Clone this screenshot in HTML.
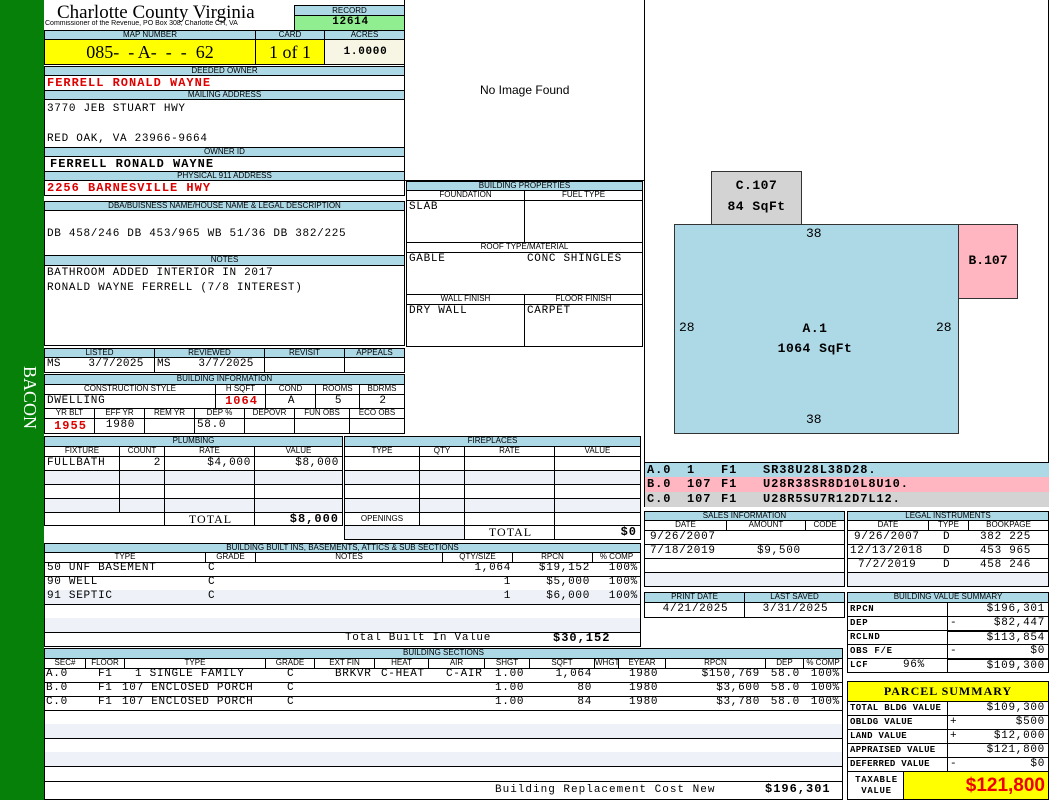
<!DOCTYPE html>
<html><head><meta charset="utf-8"><style>
*{margin:0;padding:0}
body{width:1050px;height:800px;position:relative;background:#fff;overflow:hidden;font-family:"Liberation Sans",sans-serif}
.a{position:absolute;box-sizing:border-box;overflow:hidden;white-space:nowrap}
.h{background:#add8e6;border:1px solid #000;font-size:8px;text-align:center;line-height:8px;color:#000}
.s{background:#fff;border:1px solid #000;font-size:8px;text-align:center;line-height:8px}
.c{border:1px solid #000;font-family:"Liberation Mono",monospace;font-size:11px;line-height:13px;padding-left:2px;letter-spacing:0.7px}
.alt{background:#eef2f8}
.r{text-align:right;padding-right:3px}
.ctr{text-align:center}
.red{color:#d00;font-weight:bold}
.b{font-weight:bold}
.bm{font-family:"Liberation Mono",monospace;font-weight:bold;font-size:12px;letter-spacing:1px}
.lg{position:absolute;top:0}
</style></head><body>
<div class="a" style="left:0;top:0;width:44px;height:800px;background:#07800a"></div>
<div class="a" style="left:4px;top:352px;width:36px;height:92px;color:#fff;font:18px 'Liberation Serif',serif;writing-mode:vertical-rl;text-align:center">BACON</div>

<div class="a" style="left:57px;top:2px;font:19px 'Liberation Serif',serif">Charlotte County Virginia</div>
<div class="a" style="left:45px;top:20px;font-size:7px">Commissioner of the Revenue, PO Box 308, Charlotte CH, VA</div>
<div class="a h" style="left:294px;top:5px;width:111px;height:11px;line-height:9px">RECORD</div>
<div class="a c b ctr" style="left:294px;top:15px;width:111px;height:16px;background:#90ee90">12614</div>

<div class="a h" style="left:44px;top:30px;width:212px;height:10px">MAP NUMBER</div>
<div class="a h" style="left:255px;top:30px;width:70px;height:10px">CARD</div>
<div class="a h" style="left:324px;top:30px;width:81px;height:10px">ACRES</div>
<div class="a" style="left:44px;top:39px;width:212px;height:26px;background:#ffff00;border:1px solid #000;font:18px 'Liberation Serif',serif;line-height:24px;text-align:center">085- &nbsp;- A- &nbsp;- &nbsp;- &nbsp;62</div>
<div class="a" style="left:255px;top:39px;width:70px;height:26px;background:#ffff00;border:1px solid #000;font:18px 'Liberation Serif',serif;line-height:24px;text-align:center">1 of 1</div>
<div class="a c b ctr" style="left:324px;top:39px;width:81px;height:26px;background:#f7f6e4;line-height:24px">1.0000</div>

<div class="a h" style="left:44px;top:66px;width:361px;height:10px">DEEDED OWNER</div>
<div class="a c red bm" style="left:44px;top:75px;width:361px;height:16px;line-height:15px">FERRELL RONALD WAYNE</div>
<div class="a h" style="left:44px;top:90px;width:361px;height:10px">MAILING ADDRESS</div>
<div class="a c" style="left:44px;top:99px;width:361px;height:49px;line-height:15px;padding-top:2px">3770 JEB STUART HWY<br><br>RED OAK, VA 23966-9664</div>
<div class="a h" style="left:44px;top:147px;width:361px;height:10px">OWNER ID</div>
<div class="a c bm" style="left:44px;top:156px;width:361px;height:16px;padding-left:5px;line-height:15px">FERRELL RONALD WAYNE</div>
<div class="a h" style="left:44px;top:171px;width:361px;height:10px">PHYSICAL 911 ADDRESS</div>
<div class="a c red bm" style="left:44px;top:180px;width:361px;height:16px;line-height:15px">2256 BARNESVILLE HWY</div>

<div class="a h" style="left:44px;top:201px;width:361px;height:10px">DBA/BUISNESS NAME/HOUSE NAME &amp; LEGAL DESCRIPTION</div>
<div class="a c" style="left:44px;top:210px;width:361px;height:46px;padding-top:17px">DB 458/246 DB 453/965  WB 51/36 DB 382/225</div>
<div class="a h" style="left:44px;top:255px;width:361px;height:11px">NOTES</div>
<div class="a c" style="left:44px;top:265px;width:361px;height:81px;line-height:15px">BATHROOM ADDED INTERIOR IN 2017<br>RONALD WAYNE FERRELL (7/8 INTEREST)</div>

<div class="a h" style="left:44px;top:348px;width:111px;height:10px">LISTED</div>
<div class="a h" style="left:154px;top:348px;width:111px;height:10px">REVIEWED</div>
<div class="a h" style="left:264px;top:348px;width:81px;height:10px">REVISIT</div>
<div class="a h" style="left:344px;top:348px;width:61px;height:10px">APPEALS</div>
<div class="a c" style="left:44px;top:357px;width:111px;height:16px;letter-spacing:0.3px">MS &nbsp;&nbsp;&nbsp;3/7/2025</div>
<div class="a c" style="left:154px;top:357px;width:111px;height:16px;letter-spacing:0.3px">MS &nbsp;&nbsp;&nbsp;3/7/2025</div>
<div class="a c" style="left:264px;top:357px;width:81px;height:16px"></div>
<div class="a c" style="left:344px;top:357px;width:61px;height:16px"></div>

<div class="a h" style="left:44px;top:374px;width:361px;height:11px">BUILDING INFORMATION</div>
<div class="a s" style="left:44px;top:384px;width:172px;height:11px">CONSTRUCTION STYLE</div>
<div class="a s" style="left:215px;top:384px;width:51px;height:11px">H SQFT</div>
<div class="a s" style="left:265px;top:384px;width:51px;height:11px">COND</div>
<div class="a s" style="left:315px;top:384px;width:45px;height:11px">ROOMS</div>
<div class="a s" style="left:359px;top:384px;width:46px;height:11px">BDRMS</div>
<div class="a c" style="left:44px;top:394px;width:172px;height:15px">DWELLING</div>
<div class="a c red ctr bm" style="left:215px;top:394px;width:51px;height:15px">1064</div>
<div class="a c ctr" style="left:265px;top:394px;width:51px;height:15px">A</div>
<div class="a c ctr" style="left:315px;top:394px;width:45px;height:15px">5</div>
<div class="a c ctr" style="left:359px;top:394px;width:46px;height:15px">2</div>
<div class="a s" style="left:44px;top:408px;width:51px;height:11px">YR BLT</div>
<div class="a s" style="left:94px;top:408px;width:51px;height:11px">EFF YR</div>
<div class="a s" style="left:144px;top:408px;width:51px;height:11px">REM YR</div>
<div class="a s" style="left:194px;top:408px;width:51px;height:11px">DEP %</div>
<div class="a s" style="left:244px;top:408px;width:51px;height:11px">DEPOVR</div>
<div class="a s" style="left:294px;top:408px;width:56px;height:11px">FUN OBS</div>
<div class="a s" style="left:349px;top:408px;width:56px;height:11px">ECO OBS</div>
<div class="a c red ctr bm" style="left:44px;top:418px;width:51px;height:16px;line-height:14px">1955</div>
<div class="a c ctr" style="left:94px;top:418px;width:51px;height:16px">1980</div>
<div class="a c" style="left:144px;top:418px;width:51px;height:16px"></div>
<div class="a c" style="left:194px;top:418px;width:51px;height:16px">58.0</div>
<div class="a c" style="left:244px;top:418px;width:51px;height:16px"></div>
<div class="a c" style="left:294px;top:418px;width:56px;height:16px"></div>
<div class="a c" style="left:349px;top:418px;width:56px;height:16px"></div>

<!-- plumbing -->
<div class="a h" style="left:44px;top:436px;width:299px;height:11px">PLUMBING</div>
<div class="a s" style="left:44px;top:446px;width:76px;height:11px">FIXTURE</div>
<div class="a s" style="left:119px;top:446px;width:46px;height:11px">COUNT</div>
<div class="a s" style="left:164px;top:446px;width:91px;height:11px">RATE</div>
<div class="a s" style="left:254px;top:446px;width:89px;height:11px">VALUE</div>
<div class="a c" style="left:44px;top:456px;width:76px;height:15px">FULLBATH</div>
<div class="a c r" style="left:119px;top:456px;width:46px;height:15px">2</div>
<div class="a c r" style="left:164px;top:456px;width:91px;height:15px">$4,000</div>
<div class="a c r" style="left:254px;top:456px;width:89px;height:15px">$8,000</div>
<div class="a c alt" style="left:44px;top:470px;width:76px;height:15px"></div><div class="a c alt" style="left:119px;top:470px;width:46px;height:15px"></div><div class="a c alt" style="left:164px;top:470px;width:91px;height:15px"></div><div class="a c alt" style="left:254px;top:470px;width:89px;height:15px"></div>
<div class="a c" style="left:44px;top:484px;width:76px;height:15px"></div><div class="a c" style="left:119px;top:484px;width:46px;height:15px"></div><div class="a c" style="left:164px;top:484px;width:91px;height:15px"></div><div class="a c" style="left:254px;top:484px;width:89px;height:15px"></div>
<div class="a c alt" style="left:44px;top:498px;width:76px;height:15px"></div><div class="a c alt" style="left:119px;top:498px;width:46px;height:15px"></div><div class="a c alt" style="left:164px;top:498px;width:91px;height:15px"></div><div class="a c alt" style="left:254px;top:498px;width:89px;height:15px"></div>
<div class="a c" style="left:44px;top:512px;width:121px;height:14px"></div>
<div class="a c ctr" style="left:164px;top:512px;width:91px;height:14px;font-family:'Liberation Serif',serif;font-size:12px;letter-spacing:1px">TOTAL</div>
<div class="a c r bm" style="left:254px;top:512px;width:89px;height:14px">$8,000</div>

<!-- fireplaces -->
<div class="a h" style="left:344px;top:436px;width:297px;height:11px">FIREPLACES</div>
<div class="a s" style="left:344px;top:446px;width:76px;height:11px">TYPE</div>
<div class="a s" style="left:419px;top:446px;width:46px;height:11px">QTY</div>
<div class="a s" style="left:464px;top:446px;width:91px;height:11px">RATE</div>
<div class="a s" style="left:554px;top:446px;width:87px;height:11px">VALUE</div>
<div class="a c" style="left:344px;top:456px;width:76px;height:15px"></div><div class="a c" style="left:419px;top:456px;width:46px;height:15px"></div><div class="a c" style="left:464px;top:456px;width:91px;height:15px"></div><div class="a c" style="left:554px;top:456px;width:87px;height:15px"></div>
<div class="a c alt" style="left:344px;top:470px;width:76px;height:15px"></div><div class="a c alt" style="left:419px;top:470px;width:46px;height:15px"></div><div class="a c alt" style="left:464px;top:470px;width:91px;height:15px"></div><div class="a c alt" style="left:554px;top:470px;width:87px;height:15px"></div>
<div class="a c" style="left:344px;top:484px;width:76px;height:15px"></div><div class="a c" style="left:419px;top:484px;width:46px;height:15px"></div><div class="a c" style="left:464px;top:484px;width:91px;height:15px"></div><div class="a c" style="left:554px;top:484px;width:87px;height:15px"></div>
<div class="a c alt" style="left:344px;top:498px;width:76px;height:15px"></div><div class="a c alt" style="left:419px;top:498px;width:46px;height:15px"></div><div class="a c alt" style="left:464px;top:498px;width:91px;height:15px"></div><div class="a c alt" style="left:554px;top:498px;width:87px;height:15px"></div>
<div class="a s" style="left:344px;top:512px;width:76px;height:14px;line-height:12px">OPENINGS</div><div class="a c" style="left:419px;top:512px;width:46px;height:14px"></div><div class="a c" style="left:464px;top:512px;width:91px;height:14px"></div><div class="a c" style="left:554px;top:512px;width:87px;height:14px"></div>
<div class="a c alt" style="left:344px;top:525px;width:121px;height:15px"></div>
<div class="a c ctr" style="left:464px;top:525px;width:91px;height:15px;font-family:'Liberation Serif',serif;font-size:12px;letter-spacing:1px">TOTAL</div>
<div class="a c r bm" style="left:554px;top:525px;width:87px;height:15px">$0</div>

<!-- built ins -->
<div class="a h" style="left:44px;top:543px;width:597px;height:10px">BUILDING BUILT INS, BASEMENTS, ATTICS &amp; SUB SECTIONS</div>
<div class="a s" style="left:44px;top:552px;width:162px;height:11px">TYPE</div>
<div class="a s" style="left:205px;top:552px;width:51px;height:11px">GRADE</div>
<div class="a s" style="left:255px;top:552px;width:188px;height:11px">NOTES</div>
<div class="a s" style="left:442px;top:552px;width:71px;height:11px">QTY/SIZE</div>
<div class="a s" style="left:512px;top:552px;width:81px;height:11px">RPCN</div>
<div class="a s" style="left:592px;top:552px;width:49px;height:11px">% COMP</div>
<div class="a c" style="left:44px;top:562px;width:597px;height:15px;border-width:0 1px 1px 1px"><span class="lg" style="left:2px">50 UNF BASEMENT</span><span class="lg" style="left:163px">C</span><span class="lg" style="right:129px">1,064</span><span class="lg" style="right:50px">$19,152</span><span class="lg" style="right:2px">100%</span></div>
<div class="a c" style="left:44px;top:576px;width:597px;height:15px;border-width:0 1px 1px 1px"><span class="lg" style="left:2px">90 WELL</span><span class="lg" style="left:163px">C</span><span class="lg" style="right:129px">1</span><span class="lg" style="right:50px">$5,000</span><span class="lg" style="right:2px">100%</span></div>
<div class="a c alt" style="left:44px;top:590px;width:597px;height:15px;border-width:0 1px 1px 1px"><span class="lg" style="left:2px">91 SEPTIC</span><span class="lg" style="left:163px">C</span><span class="lg" style="right:129px">1</span><span class="lg" style="right:50px">$6,000</span><span class="lg" style="right:2px">100%</span></div>
<div class="a c" style="left:44px;top:604px;width:597px;height:15px;border-width:0 1px 1px 1px"></div>
<div class="a c alt" style="left:44px;top:618px;width:597px;height:15px;border-width:0 1px 1px 1px"></div>
<div class="a c" style="left:44px;top:632px;width:597px;height:15px;border-width:0 1px 1px 1px"><span class="lg" style="left:300px">Total Built In Value</span><span class="lg bm" style="left:508px">$30,152</span></div>

<!-- building sections -->
<div class="a h" style="left:44px;top:648px;width:799px;height:11px">BUILDING SECTIONS</div>
<div class="a s" style="left:44px;top:658px;width:42px;height:11px">SEC#</div>
<div class="a s" style="left:85px;top:658px;width:40px;height:11px">FLOOR</div>
<div class="a s" style="left:124px;top:658px;width:142px;height:11px">TYPE</div>
<div class="a s" style="left:265px;top:658px;width:50px;height:11px">GRADE</div>
<div class="a s" style="left:314px;top:658px;width:61px;height:11px">EXT FIN</div>
<div class="a s" style="left:374px;top:658px;width:55px;height:11px">HEAT</div>
<div class="a s" style="left:428px;top:658px;width:57px;height:11px">AIR</div>
<div class="a s" style="left:484px;top:658px;width:46px;height:11px">SHGT</div>
<div class="a s" style="left:529px;top:658px;width:66px;height:11px">SQFT</div>
<div class="a s" style="left:594px;top:658px;width:25px;height:11px">WHGT</div>
<div class="a s" style="left:618px;top:658px;width:48px;height:11px">EYEAR</div>
<div class="a s" style="left:665px;top:658px;width:101px;height:11px">RPCN</div>
<div class="a s" style="left:765px;top:658px;width:39px;height:11px">DEP</div>
<div class="a s" style="left:803px;top:658px;width:40px;height:11px">% COMP</div>
<div class="a c" style="left:44px;top:668px;width:799px;height:15px;border-width:0 1px 1px 1px"><span class="lg" style="left:1px">A.0</span><span class="lg" style="left:53px">F1</span><span class="lg" style="left:90px">1 SINGLE FAMILY</span><span class="lg" style="left:242px">C</span><span class="lg" style="left:290px">BRKVR</span><span class="lg" style="left:336px">C-HEAT</span><span class="lg" style="left:401px">C-AIR</span><span class="lg" style="left:450px">1.00</span><span class="lg" style="right:250px">1,064</span><span class="lg" style="left:584px">1980</span><span class="lg" style="right:82px">$150,769</span><span class="lg" style="right:42px">58.0</span><span class="lg" style="right:2px">100%</span></div>
<div class="a c" style="left:44px;top:682px;width:799px;height:15px;border-width:0 1px 1px 1px"><span class="lg" style="left:1px">B.0</span><span class="lg" style="left:53px">F1</span><span class="lg" style="left:77px">107 ENCLOSED PORCH</span><span class="lg" style="left:242px">C</span><span class="lg" style="left:450px">1.00</span><span class="lg" style="right:250px">80</span><span class="lg" style="left:584px">1980</span><span class="lg" style="right:82px">$3,600</span><span class="lg" style="right:42px">58.0</span><span class="lg" style="right:2px">100%</span></div>
<div class="a c" style="left:44px;top:696px;width:799px;height:15px;border-width:0 1px 1px 1px"><span class="lg" style="left:1px">C.0</span><span class="lg" style="left:53px">F1</span><span class="lg" style="left:77px">107 ENCLOSED PORCH</span><span class="lg" style="left:242px">C</span><span class="lg" style="left:450px">1.00</span><span class="lg" style="right:250px">84</span><span class="lg" style="left:584px">1980</span><span class="lg" style="right:82px">$3,780</span><span class="lg" style="right:42px">58.0</span><span class="lg" style="right:2px">100%</span></div>
<div class="a c" style="left:44px;top:710px;width:799px;height:15px;border-width:0 1px 1px 1px"></div>
<div class="a c alt" style="left:44px;top:724px;width:799px;height:15px;border-width:0 1px 1px 1px"></div>
<div class="a c" style="left:44px;top:738px;width:799px;height:15px;border-width:0 1px 1px 1px"></div>
<div class="a c alt" style="left:44px;top:752px;width:799px;height:15px;border-width:0 1px 1px 1px"></div>
<div class="a c" style="left:44px;top:766px;width:799px;height:16px;border-width:0 1px 1px 1px"></div>
<div class="a c" style="left:44px;top:781px;width:799px;height:19px;border-width:0 1px 1px 1px"><span class="lg" style="left:450px;top:3px;letter-spacing:1px">Building Replacement Cost New</span><span class="lg bm" style="left:720px;top:2px">$196,301</span></div>

<!-- image area -->
<div class="a" style="left:404px;top:0;width:241px;height:181px;border:1px solid #000;border-top:0"></div>
<div class="a" style="left:480px;top:83px;font-size:12px">No Image Found</div>

<!-- building properties -->
<div class="a h" style="left:406px;top:181px;width:237px;height:10px">BUILDING PROPERTIES</div>
<div class="a s" style="left:406px;top:190px;width:119px;height:11px">FOUNDATION</div>
<div class="a s" style="left:524px;top:190px;width:119px;height:11px">FUEL TYPE</div>
<div class="a c" style="left:406px;top:200px;width:119px;height:43px">SLAB</div>
<div class="a c" style="left:524px;top:200px;width:119px;height:43px"></div>
<div class="a s" style="left:406px;top:242px;width:237px;height:11px">ROOF TYPE/MATERIAL</div>
<div class="a c" style="left:406px;top:252px;width:237px;height:43px">GABLE<span class="lg" style="left:120px">CONC SHINGLES</span></div>
<div class="a s" style="left:406px;top:294px;width:119px;height:11px">WALL FINISH</div>
<div class="a s" style="left:524px;top:294px;width:119px;height:11px">FLOOR FINISH</div>
<div class="a c" style="left:406px;top:304px;width:119px;height:43px">DRY WALL</div>
<div class="a c" style="left:524px;top:304px;width:119px;height:43px">CARPET</div>

<!-- sketch -->
<div class="a" style="left:644px;top:0;width:405px;height:463px;border:1px solid #000;border-top:0"></div>
<div class="a" style="left:711px;top:171px;width:91px;height:54px;background:#d3d3d3;border:1px solid #333;font:bold 13px 'Liberation Mono',monospace;text-align:center;line-height:21px;padding-top:3px;letter-spacing:0.5px">C.107<br>84 SqFt</div>
<div class="a" style="left:674px;top:224px;width:285px;height:210px;background:#add8e6;border:1px solid #333"></div>
<div class="a" style="left:958px;top:224px;width:60px;height:75px;background:#ffb6c1;border:1px solid #333;font:bold 13px 'Liberation Mono',monospace;text-align:center;line-height:72px">B.107</div>
<div class="a" style="left:806px;top:226px;font:13px 'Liberation Mono',monospace">38</div>
<div class="a" style="left:806px;top:412px;font:13px 'Liberation Mono',monospace">38</div>
<div class="a" style="left:679px;top:320px;font:13px 'Liberation Mono',monospace">28</div>
<div class="a" style="left:936px;top:320px;font:13px 'Liberation Mono',monospace">28</div>
<div class="a" style="left:760px;top:319px;width:110px;text-align:center;font:bold 13px 'Liberation Mono',monospace;line-height:20px;letter-spacing:0.5px">A.1<br>1064 SqFt</div>

<div class="a" style="left:644px;top:463px;width:405px;height:15px;background:#add8e6;font:bold 12px 'Liberation Mono',monospace;line-height:15px;border-left:1px solid #000;letter-spacing:0.9px"><span class="lg" style="left:2px">A.0</span><span class="lg" style="left:42px">1</span><span class="lg" style="left:76px">F1</span><span class="lg" style="left:118px">SR38U28L38D28.</span></div>
<div class="a" style="left:644px;top:477px;width:405px;height:15px;background:#ffb6c1;font:bold 12px 'Liberation Mono',monospace;line-height:15px;border-left:1px solid #000;letter-spacing:0.9px"><span class="lg" style="left:2px">B.0</span><span class="lg" style="left:42px">107</span><span class="lg" style="left:76px">F1</span><span class="lg" style="left:118px">U28R38SR8D10L8U10.</span></div>
<div class="a" style="left:644px;top:492px;width:405px;height:15px;background:#d3d3d3;font:bold 12px 'Liberation Mono',monospace;line-height:15px;border-left:1px solid #000;letter-spacing:0.9px"><span class="lg" style="left:2px">C.0</span><span class="lg" style="left:42px">107</span><span class="lg" style="left:76px">F1</span><span class="lg" style="left:118px">U28R5SU7R12D7L12.</span></div>

<!-- sales -->
<div class="a h" style="left:644px;top:511px;width:201px;height:10px">SALES INFORMATION</div>
<div class="a s" style="left:644px;top:520px;width:83px;height:11px">DATE</div>
<div class="a s" style="left:726px;top:520px;width:80px;height:11px">AMOUNT</div>
<div class="a s" style="left:805px;top:520px;width:40px;height:11px">CODE</div>
<div class="a c" style="left:644px;top:530px;width:201px;height:15px;padding-left:5px">9/26/2007</div>
<div class="a c" style="left:644px;top:544px;width:201px;height:15px;padding-left:5px">7/18/2019<span class="lg" style="left:112px">$9,500</span></div>
<div class="a c" style="left:644px;top:558px;width:201px;height:15px"></div>
<div class="a c alt" style="left:644px;top:572px;width:201px;height:15px"></div>

<div class="a h" style="left:847px;top:511px;width:202px;height:10px">LEGAL INSTRUMENTS</div>
<div class="a s" style="left:847px;top:520px;width:82px;height:11px">DATE</div>
<div class="a s" style="left:928px;top:520px;width:41px;height:11px">TYPE</div>
<div class="a s" style="left:968px;top:520px;width:81px;height:11px">BOOKPAGE</div>
<div class="a c" style="left:847px;top:530px;width:202px;height:15px"><span class="lg" style="left:6px">9/26/2007</span><span class="lg" style="left:95px">D</span><span class="lg" style="left:132px">382 225</span></div>
<div class="a c" style="left:847px;top:544px;width:202px;height:15px"><span class="lg" style="left:2px">12/13/2018</span><span class="lg" style="left:95px">D</span><span class="lg" style="left:132px">453 965</span></div>
<div class="a c" style="left:847px;top:558px;width:202px;height:15px"><span class="lg" style="left:10px">7/2/2019</span><span class="lg" style="left:95px">D</span><span class="lg" style="left:132px">458 246</span></div>
<div class="a c alt" style="left:847px;top:572px;width:202px;height:15px"></div>

<div class="a h" style="left:644px;top:592px;width:101px;height:11px">PRINT DATE</div>
<div class="a h" style="left:744px;top:592px;width:101px;height:11px">LAST SAVED</div>
<div class="a c ctr" style="left:644px;top:602px;width:101px;height:16px">4/21/2025</div>
<div class="a c ctr" style="left:744px;top:602px;width:101px;height:16px">3/31/2025</div>

<!-- value summary -->
<div class="a h" style="left:847px;top:592px;width:202px;height:11px">BUILDING VALUE SUMMARY</div>
<div class="a c b" style="left:847px;top:602px;width:101px;height:15px;font-size:9px">RPCN</div><div class="a c r" style="left:947px;top:602px;width:102px;height:15px">$196,301</div>
<div class="a c b" style="left:847px;top:616px;width:101px;height:15px;font-size:9px">DEP</div><div class="a c r" style="left:947px;top:616px;width:102px;height:15px"><span class="lg" style="left:2px">-</span>$82,447</div>
<div class="a c b" style="left:847px;top:630px;width:101px;height:15px;font-size:9px">RCLND</div><div class="a c r" style="left:947px;top:630px;width:102px;height:15px;border-top-width:2px;line-height:12px">$113,854</div>
<div class="a c b" style="left:847px;top:644px;width:101px;height:15px;font-size:9px">OBS F/E</div><div class="a c r" style="left:947px;top:644px;width:102px;height:15px"><span class="lg" style="left:2px">-</span>$0</div>
<div class="a c b" style="left:847px;top:658px;width:101px;height:15px;font-size:9px">LCF<span class="lg" style="left:55px;font-size:11px;font-weight:normal">96%</span></div><div class="a c r" style="left:947px;top:658px;width:102px;height:15px;border-top-width:2px;line-height:12px">$109,300</div>

<!-- parcel summary -->
<div class="a" style="left:847px;top:681px;width:202px;height:21px;background:#ffff00;border:1px solid #000;text-align:center;font:bold 12px 'Liberation Serif',serif;line-height:19px;letter-spacing:1px">PARCEL SUMMARY</div>
<div class="a c b" style="left:847px;top:701px;width:101px;height:15px;font-size:9px;letter-spacing:0.3px">TOTAL BLDG VALUE</div><div class="a c r" style="left:947px;top:701px;width:102px;height:15px">$109,300</div>
<div class="a c b" style="left:847px;top:715px;width:101px;height:15px;font-size:9px;letter-spacing:0.3px">OBLDG VALUE</div><div class="a c r" style="left:947px;top:715px;width:102px;height:15px"><span class="lg" style="left:2px">+</span>$500</div>
<div class="a c b" style="left:847px;top:729px;width:101px;height:15px;font-size:9px;letter-spacing:0.3px">LAND VALUE</div><div class="a c r" style="left:947px;top:729px;width:102px;height:15px"><span class="lg" style="left:2px">+</span>$12,000</div>
<div class="a c b" style="left:847px;top:743px;width:101px;height:15px;font-size:9px;letter-spacing:0.3px">APPRAISED VALUE</div><div class="a c r" style="left:947px;top:743px;width:102px;height:15px">$121,800</div>
<div class="a c b" style="left:847px;top:757px;width:101px;height:15px;font-size:9px;letter-spacing:0.3px">DEFERRED VALUE</div><div class="a c r" style="left:947px;top:757px;width:102px;height:15px"><span class="lg" style="left:2px">-</span>$0</div>
<div class="a c b ctr" style="left:847px;top:771px;width:57px;height:29px;font-size:9px;line-height:11px;padding-top:3px">TAXABLE<br>VALUE</div>
<div class="a" style="left:903px;top:771px;width:146px;height:29px;background:#ffff00;border:1px solid #000;color:#e00;font:bold 19px 'Liberation Sans',sans-serif;text-align:right;padding-right:3px;line-height:27px">$121,800</div>
</body></html>
